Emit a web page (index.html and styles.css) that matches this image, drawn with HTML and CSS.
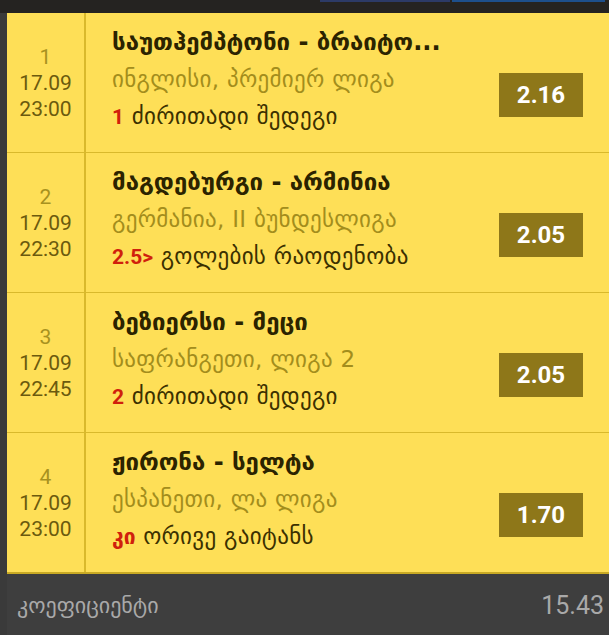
FILE: index.html
```html
<!DOCTYPE html>
<html lang="ka">

<head>
  <meta charset="UTF-8" />
  <meta name="viewport" content="width=device-width, initial-scale=1.0" />
  <title>კუპონი</title>
  <link rel="stylesheet" href="styles.css">
</head>

<body>
  <div class="top-bar">
    <span class="tab tab-dark"></span>
    <span class="tab tab-blue"></span>
  </div>

  <div class="coupon">
    <div class="bets">
      <div class="bet">
        <div class="bet-time">
          <div class="num">1</div>
          <div>17.09</div>
          <div>23:00</div>
        </div>
        <div class="bet-info">
          <div class="teams">საუთჰემპტონი - ბრაიტო...</div>
          <div class="league">ინგლისი, პრემიერ ლიგა</div>
          <div class="market"><b>1</b> ძირითადი შედეგი</div>
        </div>
        <div class="odd">2.16</div>
      </div>

      <div class="bet">
        <div class="bet-time">
          <div class="num">2</div>
          <div>17.09</div>
          <div>22:30</div>
        </div>
        <div class="bet-info">
          <div class="teams">მაგდებურგი - არმინია</div>
          <div class="league">გერმანია, II ბუნდესლიგა</div>
          <div class="market"><b>2.5&gt;</b> გოლების რაოდენობა</div>
        </div>
        <div class="odd">2.05</div>
      </div>

      <div class="bet">
        <div class="bet-time">
          <div class="num">3</div>
          <div>17.09</div>
          <div>22:45</div>
        </div>
        <div class="bet-info">
          <div class="teams">ბეზიერსი - მეცი</div>
          <div class="league">საფრანგეთი, ლიგა 2</div>
          <div class="market"><b>2</b> ძირითადი შედეგი</div>
        </div>
        <div class="odd">2.05</div>
      </div>

      <div class="bet">
        <div class="bet-time">
          <div class="num">4</div>
          <div>17.09</div>
          <div>23:00</div>
        </div>
        <div class="bet-info">
          <div class="teams">ჟირონა - სელტა</div>
          <div class="league">ესპანეთი, ლა ლიგა</div>
          <div class="market"><b>კი</b> ორივე გაიტანს</div>
        </div>
        <div class="odd">1.70</div>
      </div>
    </div>

    <div class="total">
      <span class="total-label">კოეფიციენტი</span>
      <span class="total-value">15.43</span>
    </div>
  </div>
</body>

</html>
```

FILE: styles.css
```css
body {
  margin: 0;
  background: #3a3a3a;
  font-family: Roboto, "DejaVu Sans", sans-serif;
  width: 609px;
  height: 635px;
  overflow: hidden;
}

.top-bar {
  height: 13px;
  background: #252321;
  display: flex;
  align-items: flex-start;
  padding-left: 320px;
  gap: 2px;
}

.tab {
  height: 2px;
}

.tab-dark {
  width: 130px;
  background: #2c3a66;
}

.tab-blue {
  width: 153px;
  background: #1d4f8c;
}

.coupon {
  margin-left: 7px;
}

.bets {
  background: #fedf57;
}

.bet {
  display: flex;
  height: 139px;
  border-bottom: 1px solid #d9b92c;
}

.bet:last-child {
  border-bottom: 2px solid #c9aa24;
}

.bet-time {
  width: 77px;
  border-right: 2px solid #d9b92c;
  display: flex;
  flex-direction: column;
  align-items: center;
  justify-content: center;
  font-size: 21px;
  line-height: 26px;
  color: #6b5a0e;
}

.bet-time .num {
  color: #a8921f;
}

.bet-info {
  flex: 1;
  min-width: 0;
  padding: 11px 0 0 26px;
}

.teams {
  font-family: "DejaVu Sans", sans-serif;
  font-weight: bold;
  font-size: 24px;
  line-height: 37px;
  color: #2b2300;
  white-space: nowrap;
}

.league,
.market {
  font-family: "DejaVu Sans", sans-serif;
  font-size: 23px;
  line-height: 37px;
  letter-spacing: 0.3px;
  white-space: nowrap;
}

.league {
  color: #a38d1c;
}

.market {
  color: #3b3000;
}

.market b {
  font-family: Roboto, "DejaVu Sans", sans-serif;
  color: #d0200c;
  font-size: 21px;
  letter-spacing: 0;
}

.odd {
  align-self: flex-start;
  margin: 60px 26px 0 0;
  width: 84px;
  height: 44px;
  flex-shrink: 0;
  background: #8e7719;
  color: #fff;
  font-weight: bold;
  font-size: 24px;
  line-height: 44px;
  text-align: center;
}

.total {
  height: 62px;
  background: #3e3e3e;
  display: flex;
  align-items: center;
  justify-content: space-between;
  padding: 0 5px 0 10px;
  color: #a9a9a9;
}

.total-label {
  font-family: "DejaVu Sans", sans-serif;
  font-size: 22px;
}

.total-value {
  font-size: 25px;
}
```
